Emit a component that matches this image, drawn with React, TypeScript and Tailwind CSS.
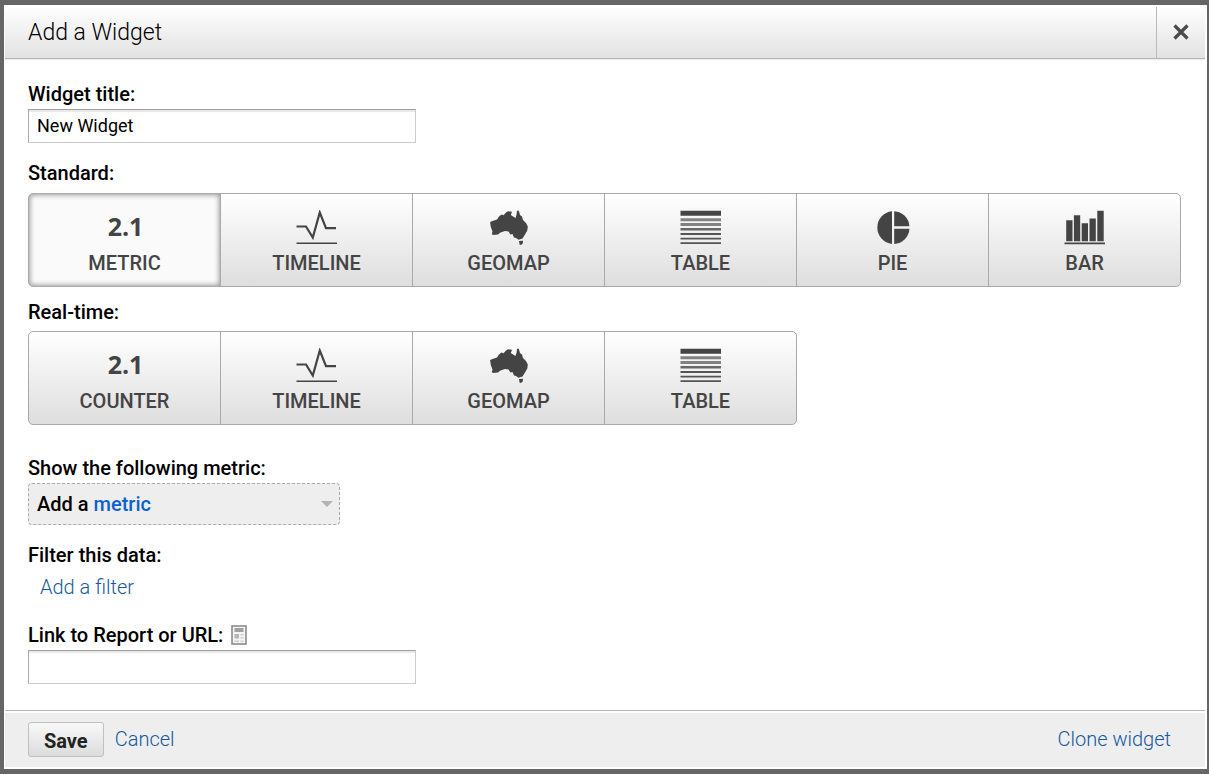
import type { ReactNode } from 'react';
import { useState } from 'react';

function NumberIcon() {
  return <span className="pb-1 pl-0.5 font-['Open_Sans',sans-serif] text-[25px] leading-8 font-bold">2.1</span>;
}

function TimelineIcon() {
  return (
    <svg width="42" height="36" viewBox="0 0 42 36" fill="none" stroke="currentColor" aria-hidden="true">
      <path d="M.5 16.5H10L16.8 27.5L23.8 2.5L30 18.2H40" strokeWidth="2.2" />
      <path d="M.5 33.2H41" strokeWidth="1.6" />
    </svg>
  );
}

function GeomapIcon() {
  return (
    <svg width="42" height="36" viewBox="0 0 42 36" fill="currentColor" aria-hidden="true">
      <path d="M2.1 12L4.5 11L9 9.5L11 6.5L13.5 4.5L15.5 5.3L18 2.5L20 1.3L24 1.7L22.8 5L27.5 8L28.6 4.5L29 .8L30.8 .8L32 5L34 6.5L35 10L38 13L39.8 16.5L39.3 20.5L37 24.5L34.5 28.5L30.5 29.7L28 28L26 27.5L24.5 24L22.5 24.5L20.5 21.5L17 21L12.5 22.5L10 24.5L5 25L3.8 24L4.5 21.5L2.8 17Z" />
      <path d="M31 31L35 30.8L34.7 33.6L33 35.1L31.5 34.6Z" />
    </svg>
  );
}

function TableIcon() {
  return (
    <svg width="42" height="36" viewBox="0 0 42 36" fill="currentColor" aria-hidden="true">
      <path d="M.5 .8H41V5.8H.5Z" />
      <path d="M.5 8.3H41V11.3H.5ZM.5 13H41V16H.5Z" opacity=".65" />
      <path d="M.5 18H41V20.5H.5Z" opacity=".8" />
      <path d="M.5 23H41V25.1H.5ZM.5 27.7H41V29.5H.5ZM.5 32.3H41V34H.5Z" opacity=".9" />
    </svg>
  );
}

function PieIcon() {
  return (
    <svg width="42" height="36" viewBox="0 0 42 36" fill="currentColor" aria-hidden="true">
      <path d="M20 1.2V34A16.5 16.5 0 0 1 20 1.2Z" />
      <path d="M22.2 1.2A16 16 0 0 1 37.4 16.2H22.2Z" />
      <path d="M22.2 18.7H37.4A16 16 0 0 1 22.2 34Z" />
    </svg>
  );
}

function BarIcon() {
  return (
    <svg width="42" height="36" viewBox="0 0 42 36" fill="currentColor" aria-hidden="true">
      <path d="M2.2 10.3H8.5V31.3H2.2ZM9.9 5.3H16.2V31.3H9.9ZM17.7 13.3H24V31.3H17.7ZM25.5 8.5H31.8V31.3H25.5ZM33.3 .8H39.7V31.3H33.3ZM.5 32.6H41V34.2H.5Z" />
    </svg>
  );
}

function ReportIcon() {
  return (
    <svg width="16" height="20" viewBox="0 0 16 20" aria-hidden="true">
      <rect x="1" y="1" width="14" height="18" fill="#f4f4f4" stroke="#8c8c8c" strokeWidth="1.6" />
      <path d="M3.5 3H12.5V7H3.5Z" fill="#a0a0a0" />
      <path d="M3.5 9H8V13.5H3.5Z" fill="#b5b5b5" />
      <path d="M9.5 9H12.5V10.5H9.5ZM9.5 12H12.5V13.5H9.5ZM3.5 15.5H8V17H3.5ZM9.5 15.5H12.5V17H9.5Z" fill="#cfcfcf" />
    </svg>
  );
}

type Option = { id: string; label: string; icon: ReactNode };

const standard: Option[] = [
  { id: 'metric', label: 'METRIC', icon: <NumberIcon /> },
  { id: 'timeline', label: 'TIMELINE', icon: <TimelineIcon /> },
  { id: 'geomap', label: 'GEOMAP', icon: <GeomapIcon /> },
  { id: 'table', label: 'TABLE', icon: <TableIcon /> },
  { id: 'pie', label: 'PIE', icon: <PieIcon /> },
  { id: 'bar', label: 'BAR', icon: <BarIcon /> },
];

const realTime: Option[] = [
  { id: 'rt-counter', label: 'COUNTER', icon: <NumberIcon /> },
  { id: 'rt-timeline', label: 'TIMELINE', icon: <TimelineIcon /> },
  { id: 'rt-geomap', label: 'GEOMAP', icon: <GeomapIcon /> },
  { id: 'rt-table', label: 'TABLE', icon: <TableIcon /> },
];

type GroupProps = { name: string; options: Option[]; selected: string; onSelect: (id: string) => void };

function OptionGroup({ name, options, selected, onSelect }: GroupProps) {
  return (
    <div role="group" aria-label={name} className="grid grid-cols-6 pr-px">
      {options.map((o) => (
        <button
          key={o.id}
          type="button"
          aria-pressed={o.id === selected}
          onClick={() => onSelect(o.id)}
          className={
            '-mr-px flex flex-col items-center border border-[#a9a9a9] pt-4 pb-[9px] text-[#444] first:rounded-l-[5px] last:rounded-r-[5px] ' +
            (o.id === selected
              ? 'bg-[#fafafa] shadow-[inset_0_0_5px_1px_#999]'
              : 'bg-linear-to-b from-white to-[#dedede]')
          }
        >
          <span className="flex h-9 items-center">{o.icon}</span>
          <span className="mt-1 text-[20px] leading-[27px] font-medium">{o.label}</span>
        </button>
      ))}
    </div>
  );
}

const labelText = 'text-[20px] leading-6 font-medium text-black';
const field =
  'block h-[34px] w-[388px] max-w-full border border-[#ccc] border-t-[#a0a0a0] border-l-[#a9a9a9] bg-white px-2 pb-0.5 text-[18px] text-black shadow-[inset_0_2px_1px_#e8e8e8] outline-none';
const link = 'text-[20px] leading-6 font-[350] text-[#15599a]';

export default function App() {
  const [selected, setSelected] = useState('metric');
  return (
    <div className="flex min-h-screen bg-[#666] pt-[5px] pr-0.5 pb-[5px] pl-1 font-[Roboto,sans-serif]">
      <div role="dialog" aria-labelledby="dialog-title" className="flex flex-1 flex-col bg-white pt-px pr-0.5 pb-0.5 pl-px">
        <header className="flex items-stretch justify-between border-b border-[#b5b5b5] bg-linear-to-b from-white to-[#e2e2e2] shadow-[0_1px_1px_#eee]">
          <h1 id="dialog-title" className="pt-[13px] pb-[11px] pl-[23px] text-[23px] leading-7 font-[350] text-black">
            Add a Widget
          </h1>
          <button type="button" aria-label="Close" className="mt-px flex w-[49px] items-center justify-center border-l border-[#b9b9b9] pb-0.5 text-[#4a4a4a]">
            <svg width="16" height="16" viewBox="0 0 16 16" stroke="currentColor" strokeWidth="3.2" aria-hidden="true">
              <path d="M1.5 1.5L14.5 14.5M14.5 1.5L1.5 14.5" />
            </svg>
          </button>
        </header>

        <main className="flex-1 pt-[23px] pr-6 pb-[25px] pl-[23px]">
          <label htmlFor="widget-title" className={labelText + ' mb-[3px] block'}>
            Widget title:
          </label>
          <input id="widget-title" type="text" defaultValue="New Widget" className={field} />

          <h2 className={labelText + ' mt-[18px] mb-2'}>Standard:</h2>
          <OptionGroup name="Standard" options={standard} selected={selected} onSelect={setSelected} />

          <h2 className={labelText + ' mt-[13px] mb-[7px]'}>Real-time:</h2>
          <OptionGroup name="Real-time" options={realTime} selected={selected} onSelect={setSelected} />

          <h2 className={labelText + ' mt-[31px] mb-[3px]'}>Show the following metric:</h2>
          <button
            type="button"
            className="flex h-[42px] w-[312px] items-center justify-between rounded-[4px] border border-dashed border-[#aaa] bg-[#eee] pr-1.5 pl-2 text-[20px] font-medium text-black"
          >
            <span>
              Add a <span className="text-[#0a62d0]">metric</span>
            </span>
            <svg width="12" height="6" viewBox="0 0 12 6" fill="#b3b3b3" aria-hidden="true">
              <path d="M0 0H12L6 6Z" />
            </svg>
          </button>

          <h2 className={labelText + ' mt-[18px] mb-2'}>Filter this data:</h2>
          <a href="#filter" className={link + ' ml-3 block w-fit'}>
            Add a filter
          </a>

          <div className="mt-6 mb-[3px] flex items-center gap-2">
            <label htmlFor="report-url" className={labelText}>
              Link to Report or URL:
            </label>
            <button type="button" aria-label="Choose a report">
              <ReportIcon />
            </button>
          </div>
          <input id="report-url" type="text" className={field} />
        </main>

        <footer className="border-t border-[#b5b5b5] pt-0.5">
          <div className="flex items-start bg-[#eee] pt-[9px] pr-[34px] pb-2.5 pl-[23px]">
            <button
              type="button"
              className="h-[35px] rounded-[3px] border border-[#c0c0c0] bg-linear-to-b from-[#f8f8f8] to-[#dcdcdc] px-[15px] pt-0.5 text-[20px] font-bold text-[#222]"
            >
              Save
            </button>
            <a href="#cancel" className={link + ' mt-[5px] ml-[11px]'}>
              Cancel
            </a>
            <a href="#clone" className={link + ' mt-[5px] ml-auto'}>
              Clone widget
            </a>
          </div>
        </footer>
      </div>
    </div>
  );
}
